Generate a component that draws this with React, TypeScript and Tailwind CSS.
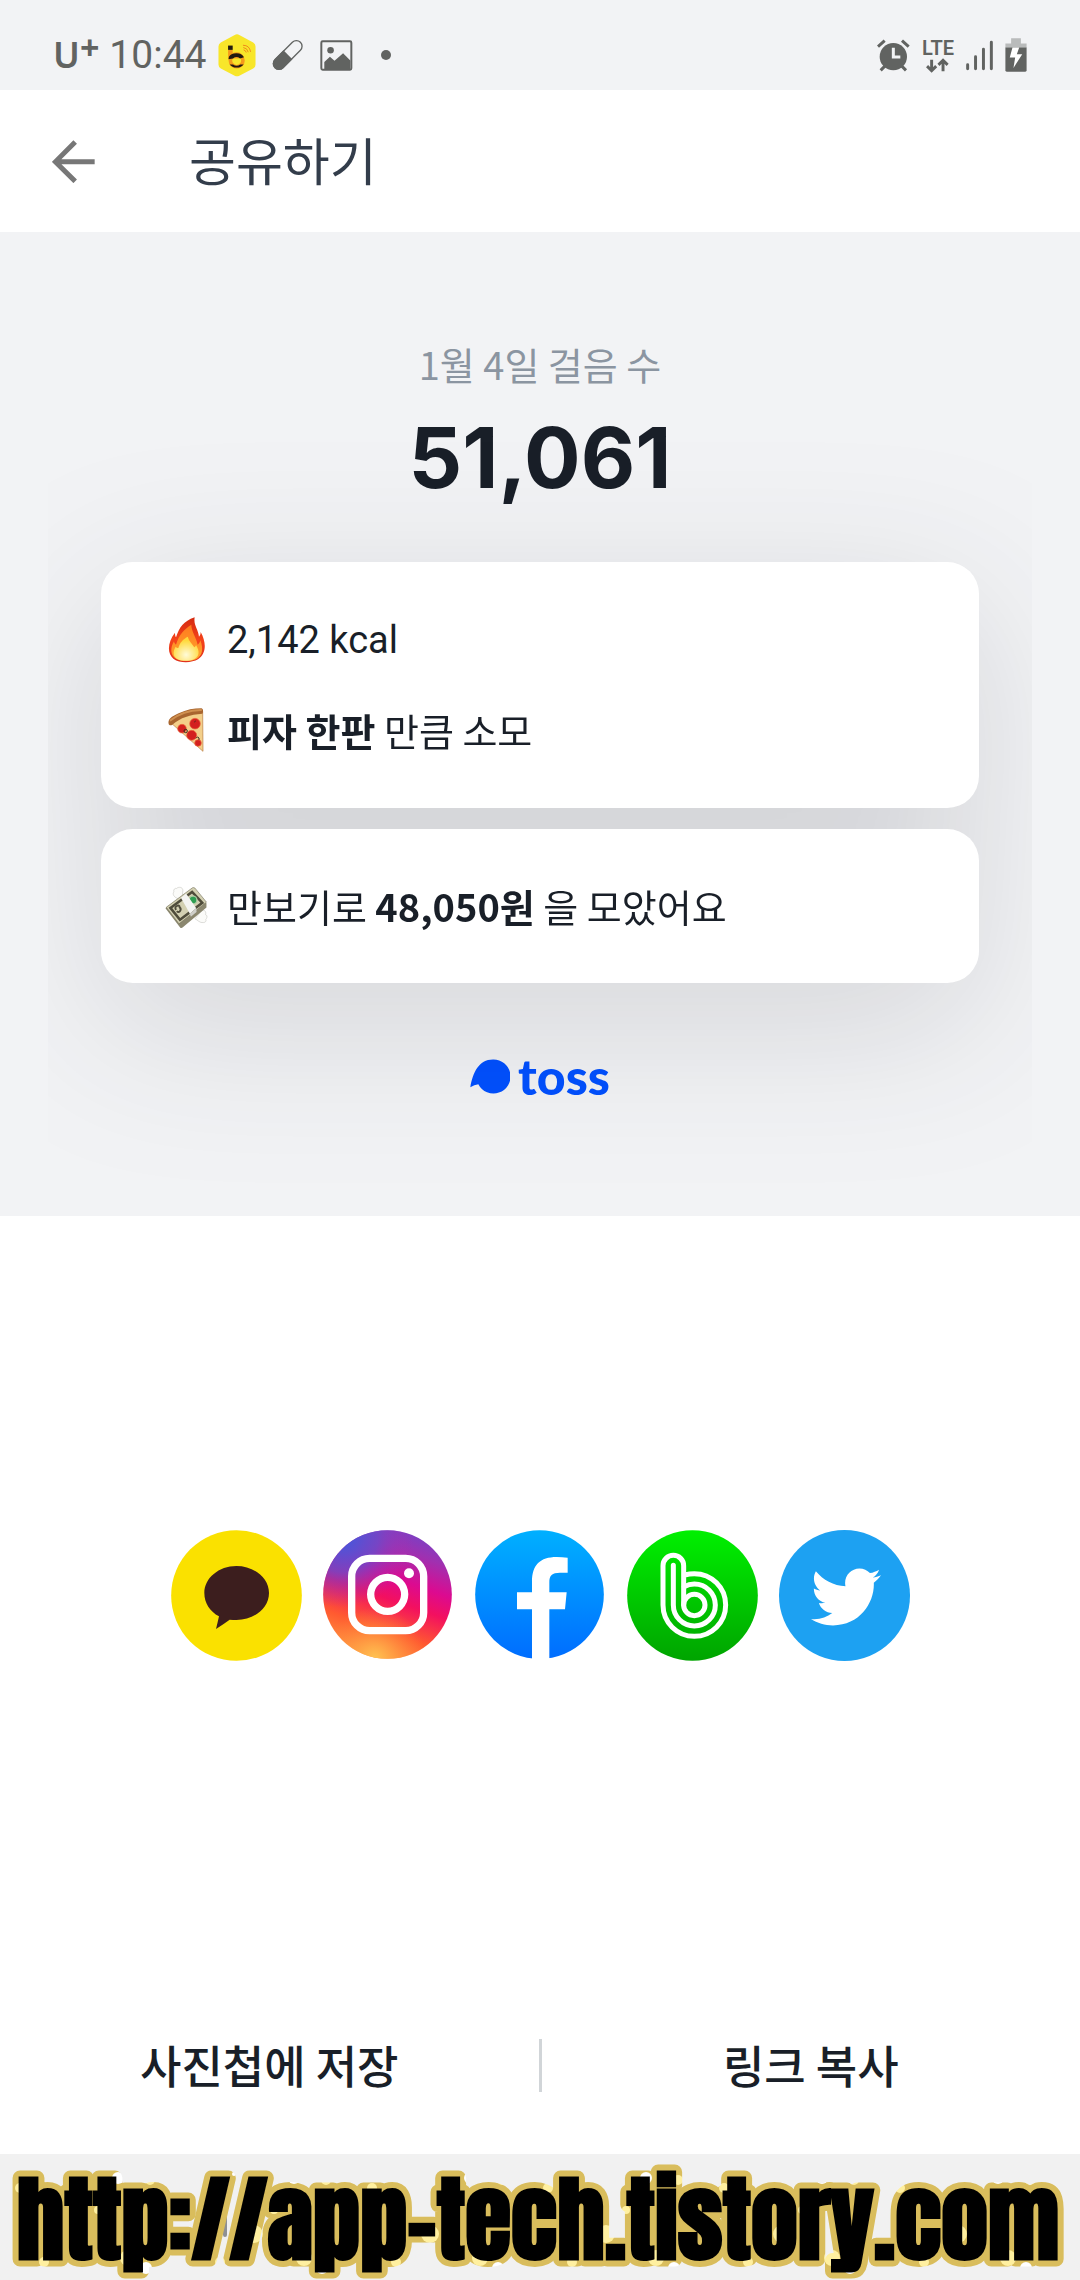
import React from 'react';
import { FaTwitter } from 'react-icons/fa';

const INK = '#616361';

/* ---------- status bar icons ---------- */

function BeeAppIcon() {
  return (
    <svg viewBox="653 100 114 130" className="h-[43px] w-[38px]">
      <path
        d="M703 103q7-4 14 0l42 23q7 4 7 12v54q0 8-7 12l-42 22q-7 4-14 0l-42-22q-7-4-7-12v-54q0-8 7-12z"
        fill="#f8e62a"
      />
      <path d="M683 148h14v14q12-4 22 0l-4 12h-32z" fill="#f59a1b" />
      <rect x="683" y="135" width="14" height="13" fill="#221a10" />
      <circle cx="709" cy="180" r="19" fill="none" stroke="#f59a1b" strokeWidth="11" />
      <path d="M686 168a26 22 0 0 1 45 2l-12 4a15 12 0 0 0-21 0l-14 2z" fill="#221a10" />
      <path d="M688 192a24 18 0 0 0 42 0h-10a15 10 0 0 1-22 0z" fill="#221a10" />
      <g fill="none" stroke="#ee8a1a" strokeWidth="3">
        <path d="M728 134q20 0 23 20" />
        <path d="M729 141q12 1 15 14" />
        <path d="M730 148q6 1 8 8" />
      </g>
    </svg>
  );
}

function PillIcon() {
  return (
    <svg viewBox="814 117 96 96" className="size-8">
      <g transform="rotate(-45 861 165)">
        <rect x="807" y="148" width="108" height="34" rx="17" fill="none" stroke={INK} strokeWidth="4" />
        <path d="M862 146h-37a19 19 0 0 0 0 38h37z" fill={INK} />
      </g>
    </svg>
  );
}

function PictureIcon() {
  return (
    <svg viewBox="962 118 98 94" className="h-[31px] w-[33px]">
      <rect x="965" y="122" width="91" height="86" rx="4" fill="none" stroke={INK} strokeWidth="6" />
      <circle cx="993" cy="149" r="10" fill={INK} />
      <path d="M974 206v-21l17-16 14 12 26-23 22 22v26z" fill={INK} />
    </svg>
  );
}

function AlarmIcon() {
  return (
    <svg viewBox="104 114 99 99" className="size-[33px]">
      <g fill="none" stroke={INK} strokeWidth="9">
        <path d="M107 137l20-18M199 137l-20-18" />
        <path d="M115 208l14-14M191 208l-14-14" />
      </g>
      <circle cx="153" cy="167" r="41" fill={INK} />
      <path d="M153 140v28h21" fill="none" stroke="#f1f3f5" strokeWidth="9" />
    </svg>
  );
}

function DataArrowsIcon() {
  return (
    <svg viewBox="258 172 70 46" className="h-[15px] w-[23px]" fill="none" stroke={INK} strokeWidth="9">
      <path d="M275 177v34M261 197l14 14 14-14" />
      <path d="M310 213v-34M296 193l14-14 14 14" />
    </svg>
  );
}

function SignalIcon() {
  return (
    <svg viewBox="372 120 82 92" className="h-[31px] w-[27px]" stroke={INK} strokeWidth="9" strokeLinecap="round">
      <path d="M377 194v12M401 170v36M425 147v59M449 126v80" />
    </svg>
  );
}

function BatteryIcon() {
  return (
    <svg viewBox="494 113 65 101" className="h-[34px] w-[22px]">
      <path d="M512 114h29v15h17v13h-63v-13h17z" fill="#b9bbbb" />
      <path d="M495 141h63v68q0 4-4 4h-55q-4 0-4-4z" fill={INK} />
      <path d="M516 141h20l-7 20h16l-26 41 5-31h-16z" fill="#fff" />
    </svg>
  );
}

function StatusBar() {
  return (
    <div className="flex h-[90px] items-center justify-between bg-[#f2f3f5] px-[53px] pt-5 text-[#616361]">
      <div className="flex items-center">
        <span className="flex items-center font-['Noto_Sans',sans-serif] text-4xl font-semibold">
          U<sup className="top-0 mb-4 text-[34px] font-bold leading-none">+</sup>
        </span>
        <time className="ml-2.5 font-[Roboto,sans-serif] text-[39px] leading-none">10:44</time>
        <span className="ml-3 flex items-center gap-4">
          <BeeAppIcon />
          <PillIcon />
          <PictureIcon />
          <span className="ml-3 size-2.5 rounded-full bg-[#616361]" />
        </span>
      </div>
      <div className="flex items-center gap-3">
        <AlarmIcon />
        <span className="flex flex-col items-center font-[Roboto,sans-serif] text-xl font-semibold leading-5">
          LTE
          <DataArrowsIcon />
        </span>
        <SignalIcon />
        <BatteryIcon />
      </div>
    </div>
  );
}

/* ---------- card pictograms ---------- */

function FireIcon() {
  return (
    <svg viewBox="232 200 120 144" className="h-12 w-10">
      <defs>
        <linearGradient id="fire-outer" x1="0" y1="0" x2="0" y2="1">
          <stop offset="0" stopColor="#d42a10" />
          <stop offset="0.5" stopColor="#f4431a" />
          <stop offset="1" stopColor="#e0301c" />
        </linearGradient>
        <linearGradient id="fire-mid" x1="0" y1="0" x2="0" y2="1">
          <stop offset="0" stopColor="#ff7a1e" />
          <stop offset="1" stopColor="#ffa62e" />
        </linearGradient>
        <radialGradient id="fire-core" cx="0.5" cy="0.75" r="0.6">
          <stop offset="0" stopColor="#fffbd8" />
          <stop offset="1" stopColor="#ffd93a" />
        </radialGradient>
      </defs>
      <path
        d="M315 204c-4 24 10 34 13 58 4-4 5-9 5-14 18 32 17 66-8 82-18 11-55 12-73-1-21-16-18-52 4-79 0 6 1 11 3 14 10-30 22-48 56-60z"
        fill="url(#fire-outer)"
      />
      <path
        d="M305 226c0 20 14 36 19 60 4-3 7-8 8-13 10 25 6 46-10 55-17 9-47 9-63 0-17-10-18-32-6-52 1 5 3 8 6 10 9-30 24-46 46-60z"
        fill="url(#fire-mid)"
      />
      <path
        d="M294 262c4 14 14 22 20 32 3-2 4-4 5-7 13 20 9 36-6 43-14 6-36 6-49 0-14-8-16-22-6-38 3 3 5 4 8 4 4-16 14-26 28-34z"
        fill="url(#fire-core)"
      />
    </svg>
  );
}

function PizzaIcon() {
  return (
    <svg viewBox="232 472 120 144" className="h-12 w-10">
      <path d="M241 520c24-20 60-32 98-32l1 120z" fill="#f3cf8a" stroke="#b87a3c" strokeWidth="2" />
      <path d="M237 526c-3-14 8-22 30-32 24-11 45-15 68-15 6 0 7 12 3 16-36 2-66 12-90 33-4 3-10 2-11-2z" fill="#a8652f" />
      <path d="M243 515c22-18 54-30 91-31" fill="none" stroke="#cf9050" strokeWidth="6" strokeLinecap="round" />
      <g fill="#d3201f" stroke="#ee6a3c" strokeWidth="2">
        <circle cx="316" cy="525" r="16" />
        <circle cx="277" cy="540" r="13" />
        <circle cx="306" cy="560" r="15" />
        <circle cx="325" cy="583" r="10" />
      </g>
      <g fill="none" stroke="#3a2c1c" strokeWidth="3">
        <circle cx="288" cy="547" r="5" />
        <path d="M319 569q4-8 9-1v6M314 520l4-3" />
      </g>
    </svg>
  );
}

function MoneyIcon() {
  return (
    <svg viewBox="0 0 138 144" className="h-12 w-[46px]">
      <g fill="#fbfbf9" stroke="#c9c9c4" strokeWidth="2">
        <path d="M44 50c-16-4-22-16-16-22-3-8 4-13 8-11 6-6 20-5 20 6l-2 24z" />
        <path d="M94 112c8 4 16 14 26 12 8 0 10-6 8-10 6-6 4-14-1-15 3-8-2-15-10-14z" />
      </g>
      <path d="M2 80l46 60q4 3 8-1l74-62v-14L84 20 2 78z" fill="#8b876f" />
      <path d="M4 76L86 15q4-2 8 1l36 44-86 68z" fill="#d3d0b2" stroke="#77745e" strokeWidth="2" />
      <path d="M17 78l68-50 32 34-70 53z" fill="none" stroke="#4f4c3b" strokeWidth="8" />
      <circle cx="88" cy="53" r="12" fill="#2f9e52" stroke="#a9c9a2" strokeWidth="4" />
      <path d="M35 84q-6-8 2-12t9 4q6 6 1 12t-10 0" fill="none" stroke="#4f4c3b" strokeWidth="6" />
      <path d="M50 46l16-13 32 46-20 17z" fill="#f4f4f2" />
      <path d="M78 96l20-17 1 12-18 15z" fill="#cfcfca" />
    </svg>
  );
}

function TossLogo() {
  return (
    <div className="flex items-center justify-center gap-2 text-[#0050ff]">
      <svg viewBox="117 122 120 104" className="h-[35px] w-10" fill="currentColor">
        <path d="M118 206c7-42 25-83 68-83a51 51 0 1 1-44 74c-8 1-16 4-24 9z" />
      </svg>
      <span className="font-[Lato,sans-serif] text-[50px] font-black leading-[56px]">toss</span>
    </div>
  );
}

/* ---------- share targets ---------- */

function KakaoIcon() {
  return (
    <svg viewBox="33 60 393 393" className="size-[131px]">
      <circle cx="229.5" cy="256.5" r="196" fill="#fae100" />
      <path
        d="M229 168c54 0 98 36 98 81s-44 81-98 81q-10 0-20-1-18 13-41 28 4-15 9-38c-27-14-44-40-44-70 0-45 44-81 96-81z"
        fill="#3c1e1e"
      />
    </svg>
  );
}

function InstagramIcon() {
  return (
    <svg viewBox="489 60 387 387" className="size-[129px]">
      <defs>
        <linearGradient id="ig-base" x1="0.3" y1="1" x2="0.65" y2="0">
          <stop offset="0" stopColor="#ff9a40" />
          <stop offset="0.25" stopColor="#ff5a30" />
          <stop offset="0.48" stopColor="#f3105f" />
          <stop offset="0.64" stopColor="#dc0a90" />
          <stop offset="0.85" stopColor="#a030b0" />
          <stop offset="1" stopColor="#7a40c4" />
        </linearGradient>
        <radialGradient id="ig-glow" cx="0.4" cy="1" r="0.4">
          <stop offset="0" stopColor="#ffc452" />
          <stop offset="1" stopColor="#ff8a3a" stopOpacity="0" />
        </radialGradient>
        <radialGradient id="ig-blue" cx="0.15" cy="0.05" r="0.55">
          <stop offset="0" stopColor="#3d5be0" />
          <stop offset="0.5" stopColor="#6a4bcb" stopOpacity="0.8" />
          <stop offset="1" stopColor="#b02cae" stopOpacity="0" />
        </radialGradient>
      </defs>
      <circle cx="682.5" cy="253.5" r="193" fill="url(#ig-base)" />
      <circle cx="682.5" cy="253.5" r="193" fill="url(#ig-glow)" />
      <circle cx="682.5" cy="253.5" r="193" fill="url(#ig-blue)" />
      <g fill="none" stroke="#fff" strokeWidth="22">
        <rect x="575" y="145" width="216" height="217" rx="54" />
        <circle cx="683" cy="253" r="51" />
      </g>
      <circle cx="747" cy="190" r="15" fill="#fff" />
    </svg>
  );
}

function FacebookIcon() {
  return (
    <svg viewBox="45 60 387 387" className="size-[129px]">
      <defs>
        <linearGradient id="fb-base" x1="0" y1="0" x2="0" y2="1">
          <stop offset="0" stopColor="#00b0ff" />
          <stop offset="1" stopColor="#006dff" />
        </linearGradient>
      </defs>
      <circle cx="238.5" cy="253.5" r="193" fill="url(#fb-base)" />
      <path
        d="M216 447V298h-45v-51h45v-32c0-50 24-74 74-74q16 0 33 2v45h-23c-24 0-32 8-32 29v30h52l-5 51h-47v149z"
        fill="#fff"
      />
    </svg>
  );
}

function BandIcon() {
  return (
    <svg viewBox="501 60 393 393" className="size-[131px]">
      <defs>
        <linearGradient id="band-base" x1="0" y1="0" x2="0" y2="1">
          <stop offset="0" stopColor="#00f000" />
          <stop offset="1" stopColor="#00a400" />
        </linearGradient>
      </defs>
      <circle cx="697.5" cy="256.5" r="196" fill="url(#band-base)" />
      <g fill="none" stroke="#fff" strokeWidth="15" strokeLinecap="round">
        <path d="M671 284V167a31 31 0 0 0-62 0v118a94 94 0 1 0 94-94q-14 0-29 4" />
        <path d="M640 166v119a63 63 0 1 0 63-63q-16 0-30 8" />
        <circle cx="703" cy="285" r="32" />
      </g>
    </svg>
  );
}

function TwitterIcon() {
  return (
    <span className="flex size-[131px] items-center justify-center rounded-full bg-[#1da1f2] pl-1 pt-1 text-white">
      <FaTwitter className="size-[70px]" />
    </span>
  );
}

const TARGETS = [
  { name: 'KakaoTalk', Icon: KakaoIcon },
  { name: 'Instagram', Icon: InstagramIcon },
  { name: 'Facebook', Icon: FacebookIcon },
  { name: 'BAND', Icon: BandIcon },
  { name: 'Twitter', Icon: TwitterIcon },
];

/* ---------- blog banner over the system navigation ---------- */

function BlogBanner() {
  return (
    <svg viewBox="0 0 1080 126" className="absolute inset-0 h-full w-full" role="img" aria-label="blog address">
      <defs>
        <pattern id="glitter" width="176" height="126" patternUnits="userSpaceOnUse">
          <rect width="176" height="126" fill="#d9bd5c" />
          <g fill="#fff0a0">
            <circle cx="20" cy="34" r="5" />
            <circle cx="78" cy="80" r="9" />
            <circle cx="98" cy="56" r="4" />
            <circle cx="128" cy="104" r="8" />
            <circle cx="150" cy="26" r="5" />
            <circle cx="44" cy="108" r="5" />
          </g>
          <g fill="#fff">
            <circle cx="118" cy="24" r="6" />
            <circle cx="146" cy="114" r="6" />
            <circle cx="58" cy="20" r="2" />
          </g>
        </pattern>
      </defs>
      <text
        x="538"
        y="105"
        fontFamily="Anton, 'Roboto Condensed', sans-serif"
        fontSize="94"
        fontWeight="700"
        textAnchor="middle"
        stroke="url(#glitter)"
        strokeWidth="12"
        strokeLinejoin="round"
        paintOrder="stroke"
      >
        http://app-tech.tistory.com
      </text>
    </svg>
  );
}

export default function App() {
  return (
    <div className="flex min-h-screen flex-col bg-white font-['Noto_Sans_CJK_KR',sans-serif] text-[#191f28]">
      <StatusBar />

      <header className="flex h-[142px] items-center gap-[94px] px-[52px]">
        <button type="button" aria-label="뒤로">
          <svg viewBox="158 420 128 128" className="size-[43px]" fill="none" stroke="#777" strokeWidth="15">
            <path d="M285 485H170M227 426l-59 59 59 58" />
          </svg>
        </button>
        <h1 className="pb-1 text-[51px] leading-[72px] text-[#333d4b]">공유하기</h1>
      </header>

      <main className="flex grow flex-col">
        <section className="bg-[#f2f3f5]">
          <div className="mx-12 overflow-hidden px-[53px] pb-[108px] pt-[102px]">
            <p className="text-center text-[38px] leading-[60px] text-[#8b95a1]">1월 4일 걸음 수</p>
            <p className="mt-[18px] text-center font-[Inter,sans-serif] text-[84px] font-bold leading-[92px]">51,061</p>

            <div className="mt-[58px] flex flex-col gap-[21px] drop-shadow-[0_40px_80px_rgba(25,31,40,0.14)]">
              <ul className="flex flex-col gap-[34px] rounded-[32px] bg-white px-16 py-[50px] text-[38px] leading-[56px]">
                <li className="flex items-center gap-[18px]">
                  <span className="flex w-11 justify-center">
                    <FireIcon />
                  </span>
                  <span className="font-[Roboto,sans-serif]">2,142 kcal</span>
                </li>
                <li className="flex items-center gap-[18px]">
                  <span className="flex w-11 justify-center">
                    <PizzaIcon />
                  </span>
                  <span>
                    <b>피자 한판</b> 만큼 소모
                  </span>
                </li>
              </ul>
              <p className="flex items-center gap-[18px] rounded-[32px] bg-white px-16 py-[49px] text-[38px] leading-[56px]">
                <span className="flex w-11 justify-center">
                  <MoneyIcon />
                </span>
                <span>
                  만보기로 <b>48,050원</b> 을 모았어요
                </span>
              </p>
            </div>
            <div className="pb-1 pt-[65px]">
              <TossLogo />
            </div>
          </div>
        </section>

        <section className="flex grow items-center justify-center gap-[21px] pb-0.5">
          {TARGETS.map(({ name, Icon }) => (
            <button key={name} type="button" aria-label={name} className="flex size-[131px]">
              <Icon />
            </button>
          ))}
        </section>

        <div className="flex h-[178px] items-center text-[45px] font-medium">
          <button type="button" className="flex-1">
            사진첩에 저장
          </button>
          <span className="h-[53px] w-[3px] bg-[#d1d5d8]" />
          <button type="button" className="flex-1">
            링크 복사
          </button>
        </div>
      </main>

      <footer className="relative flex h-[126px] items-center bg-[#f1f1f1] pl-[223px]">
        <svg viewBox="0 0 36 40" className="h-10 w-9" stroke="#8e9093" strokeWidth="4" strokeLinecap="round">
          <path d="M2 2v36M18 2v36M34 2v36" />
        </svg>
        <BlogBanner />
      </footer>
    </div>
  );
}
